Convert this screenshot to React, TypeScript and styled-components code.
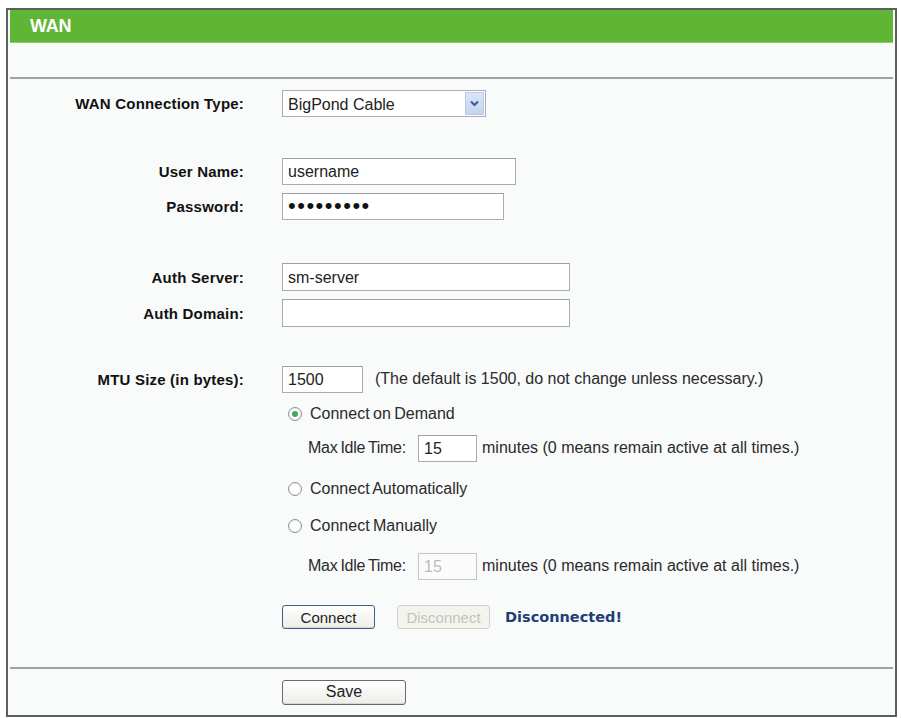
import React from "react";
import styled, { createGlobalStyle } from "styled-components";

const GlobalStyle = createGlobalStyle`
  body {
    margin: 0;
    background: #ffffff;
    font-family: "Liberation Sans", Arial, sans-serif;
    color: #222;
  }
`;

const Frame = styled.div`
  box-sizing: border-box;
  width: 891px;
  margin: 8px 0 0 6px;
  padding: 0 2px 8px 2px;
  border: 2px solid #5c5f5f;
  background: #f9fafa;
`;

const Header = styled.div`
  height: 32px;
  display: flex;
  align-items: center;
  padding-left: 20px;
  background: #60b634;
  border-bottom: 1px solid #8dcc66;
  color: #ffffff;
  font-size: 18px;
  font-weight: bold;
  letter-spacing: -0.3px;
`;

const Divider = styled.div<{ $mt: number }>`
  margin-top: ${(p) => p.$mt}px;
  height: 0;
  border-top: 2px solid #9ea3a3;
`;

const Row = styled.div<{ $mt: number; $h?: number }>`
  display: grid;
  grid-template-columns: 234px 1fr;
  column-gap: 38px;
  align-items: center;
  height: ${(p) => p.$h ?? 30}px;
  margin-top: ${(p) => p.$mt}px;
`;

const Label = styled.label`
  text-align: right;
  font-size: 15px;
  font-weight: bold;
  color: #111;
  letter-spacing: 0.2px;
`;

const Field = styled.div<{ $indent?: number }>`
  display: flex;
  align-items: center;
  padding-left: ${(p) => p.$indent ?? 0}px;
  font-size: 16px;
  color: #2a2a2a;
  white-space: nowrap;
`;

const TextBox = styled.input<{ $w: number; $h?: number }>`
  box-sizing: border-box;
  width: ${(p) => p.$w}px;
  height: ${(p) => p.$h ?? 27}px;
  margin: 0;
  padding: 2px 5px 0;
  border: 1px solid #a7adb3;
  border-top-color: #9aa0a6;
  background: #ffffff;
  font-family: "Liberation Sans", Arial, sans-serif;
  font-size: 16px;
  color: #222;
  outline: none;

  &:disabled {
    color: #b9bdbd;
    border-color: #c2c6c6;
    background: #fbfbfb;
  }
`;

const PasswordBox = styled(TextBox)`
  padding-top: 0;
  font-size: 22px;
  letter-spacing: 1.5px;
  color: #111;
`;

const SelectWrap = styled.div`
  position: relative;
  width: 204px;
  height: 27px;
`;

const Select = styled.select`
  box-sizing: border-box;
  width: 100%;
  height: 100%;
  margin: 0;
  padding: 2px 5px 0;
  appearance: none;
  border: 1px solid #a9aeb3;
  border-radius: 0;
  background: #ffffff;
  font-family: "Liberation Sans", Arial, sans-serif;
  font-size: 16px;
  color: #222;
  outline: none;
`;

const SelectArrow = styled.span`
  position: absolute;
  top: 2px;
  right: 2px;
  bottom: 2px;
  width: 17px;
  display: flex;
  align-items: center;
  justify-content: center;
  border: 1px solid #b8c8e6;
  background: linear-gradient(#dbe5f7, #c4d4f0);
  pointer-events: none;
`;

const Hint = styled.span<{ $gap: number }>`
  margin-left: ${(p) => p.$gap}px;
`;

const Caption = styled.span`
  width: 110px;
  letter-spacing: -0.3px;
  word-spacing: -1px;
`;

const RadioOption = styled.label`
  display: flex;
  align-items: center;
  gap: 8px;
  padding-left: 6px;
  font-size: 16px;
  color: #2a2a2a;
  word-spacing: -1px;
`;

const RadioDot = styled.span<{ $checked?: boolean }>`
  box-sizing: border-box;
  width: 14px;
  height: 14px;
  border-radius: 50%;
  border: 1.5px solid #8d9292;
  background: radial-gradient(circle at 50% 50%, #ffffff 40%, #e6e8e8 100%);
  display: flex;
  align-items: center;
  justify-content: center;

  &::after {
    content: "";
    display: ${(p) => (p.$checked ? "block" : "none")};
    width: 6px;
    height: 6px;
    border-radius: 50%;
    background: #47a75a;
  }
`;

const Button = styled.button<{ $w: number; $h?: number }>`
  box-sizing: border-box;
  width: ${(p) => p.$w}px;
  height: ${(p) => p.$h ?? 24}px;
  margin: 0;
  padding: 0;
  border: 1px solid #3f5f8c;
  border-radius: 3px;
  background: linear-gradient(#ffffff, #eceee8);
  box-shadow: inset 0 -1px 0 #d6d8d0;
  font-family: "Liberation Sans", Arial, sans-serif;
  font-size: 15px;
  color: #222;

  &:disabled {
    border-color: #d2d2cc;
    background: #f4f4ee;
    box-shadow: none;
    color: #c3c3bd;
  }
`;

const SaveButton = styled(Button)`
  border-color: #666a6a;
  font-size: 16px;
`;

const Status = styled.span`
  margin-left: 15px;
  font-family: "DejaVu Sans", Verdana, sans-serif;
  font-size: 14.5px;
  font-weight: bold;
  color: #1e3f75;
`;

const ButtonGap = styled.span`
  width: 22px;
`;

const Chevron = () => (
  <svg width="9" height="7" viewBox="0 0 9 7">
    <path d="M1 1.5 L4.5 5 L8 1.5" fill="none" stroke="#3a5a9a" strokeWidth="2" />
  </svg>
);

const IdleTime = ({ disabled }: { disabled?: boolean }) => (
  <Field $indent={26}>
    <Caption>Max Idle Time:</Caption>
    <TextBox $w={59} defaultValue="15" disabled={disabled} />
    <Hint $gap={5}>minutes (0 means remain active at all times.)</Hint>
  </Field>
);

export default function App() {
  return (
    <>
      <GlobalStyle />
      <Frame>
        <Header>WAN</Header>
        <Divider $mt={34} />

        <Row $mt={8} $h={32}>
          <Label>WAN Connection Type:</Label>
          <Field>
            <SelectWrap>
              <Select defaultValue="bigpond">
                <option value="dynamic">Dynamic IP</option>
                <option value="static">Static IP</option>
                <option value="pppoe">PPPoE</option>
                <option value="bigpond">BigPond Cable</option>
                <option value="l2tp">L2TP</option>
                <option value="pptp">PPTP</option>
              </Select>
              <SelectArrow>
                <Chevron />
              </SelectArrow>
            </SelectWrap>
          </Field>
        </Row>

        <Row $mt={37}>
          <Label>User Name:</Label>
          <Field>
            <TextBox $w={234} defaultValue="username" />
          </Field>
        </Row>
        <Row $mt={5}>
          <Label>Password:</Label>
          <Field>
            <PasswordBox $w={222} type="password" defaultValue="bigpond01" />
          </Field>
        </Row>

        <Row $mt={41}>
          <Label>Auth Server:</Label>
          <Field>
            <TextBox $w={288} $h={28} defaultValue="sm-server" />
          </Field>
        </Row>
        <Row $mt={6}>
          <Label>Auth Domain:</Label>
          <Field>
            <TextBox $w={288} $h={28} defaultValue="" />
          </Field>
        </Row>

        <Row $mt={36}>
          <Label>MTU Size (in bytes):</Label>
          <Field>
            <TextBox $w={81} defaultValue="1500" />
            <Hint $gap={12}>(The default is 1500, do not change unless necessary.)</Hint>
          </Field>
        </Row>

        <Row $mt={5}>
          <span />
          <RadioOption>
            <RadioDot $checked />
            Connect on Demand
          </RadioOption>
        </Row>
        <Row $mt={4}>
          <span />
          <IdleTime />
        </Row>
        <Row $mt={11}>
          <span />
          <RadioOption>
            <RadioDot />
            Connect Automatically
          </RadioOption>
        </Row>
        <Row $mt={7}>
          <span />
          <RadioOption>
            <RadioDot />
            Connect Manually
          </RadioOption>
        </Row>
        <Row $mt={10}>
          <span />
          <IdleTime disabled />
        </Row>

        <Row $mt={21}>
          <span />
          <Field>
            <Button $w={93}>Connect</Button>
            <ButtonGap />
            <Button $w={93} disabled>
              Disconnect
            </Button>
            <Status>Disconnected!</Status>
          </Field>
        </Row>

        <Divider $mt={35} />

        <Row $mt={8}>
          <span />
          <Field>
            <SaveButton $w={124} $h={25}>
              Save
            </SaveButton>
          </Field>
        </Row>
      </Frame>
    </>
  );
}
